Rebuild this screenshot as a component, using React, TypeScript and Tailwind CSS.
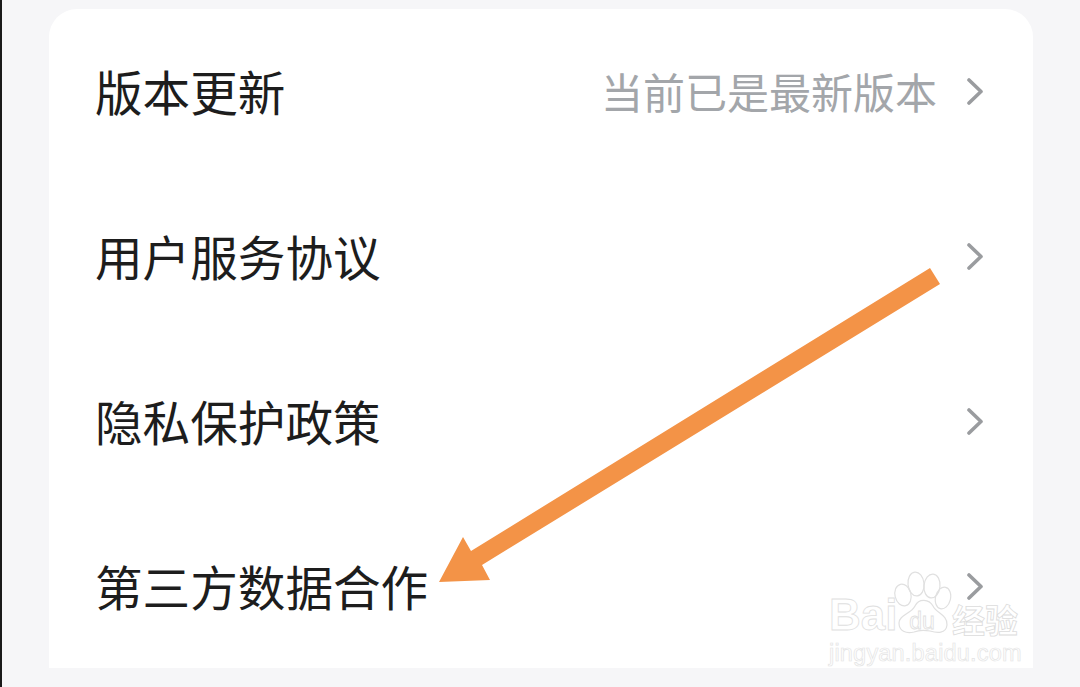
export default function App() {
  const rows = [
    { label: "版本更新", value: "当前已是最新版本" },
    { label: "用户服务协议" },
    { label: "隐私保护政策" },
    { label: "第三方数据合作" },
  ];
  return (
    <div className="relative h-[687px] w-[1080px] overflow-hidden bg-[#f6f6f8] shadow-[inset_2px_0_0_#1a1a1a] pt-[9px] pl-[49px] font-['Noto_Sans_CJK_SC','Noto_Sans',sans-serif]">
      <div className="flex h-[659px] w-[984px] flex-col rounded-t-[28px] bg-white">
        {rows.map((r) => (
          <div key={r.label} className="flex h-[165px] shrink-0 items-center pl-[46px] pr-[50px]">
            <span className="mb-[2px] text-[47.6px] leading-none text-[#1d1d1d]">{r.label}</span>
            <span className="mb-[2px] ml-auto text-[42px] leading-none text-[#a3a6aa]">{r.value}</span>
            <svg width="16" height="27" viewBox="0 0 16 27" className="ml-[30px]" fill="none">
              <path d="M2 2 L14 13.5 L2 25" stroke="#9a9c9f" strokeWidth="3.6" strokeLinecap="round" strokeLinejoin="round" />
            </svg>
          </div>
        ))}
      </div>

      {/* Orange annotation arrow */}
      <svg className="absolute left-0 top-0" width="1080" height="687" viewBox="0 0 1080 687" fill="none">
        <path d="M930 268 L940 284 L482 565 L490 580 L439 582 L463 537 L471 551 Z" fill="#f39347" />
      </svg>

      {/* Watermark */}
      <div className="absolute left-[829px] top-[570px] flex w-[200px] flex-col text-transparent">
        <div className="flex h-[66px] items-end">
          <span className="mb-[-1px] w-[63px] shrink-0 font-['Liberation_Sans',sans-serif] text-[44px] font-bold leading-none [-webkit-text-stroke:0.8px_#e0e0e0]">Bai</span>
          <div className="relative h-[66px] w-[60px] shrink-0">
            <svg className="absolute inset-0" width="60" height="66" viewBox="0 0 60 66" fill="none" stroke="#e0e0e0" strokeWidth="1.2">
              <ellipse cx="11" cy="25" rx="8" ry="11" transform="rotate(-14 11 25)" />
              <ellipse cx="24" cy="14" rx="8" ry="12" transform="rotate(-6 24 14)" />
              <ellipse cx="40" cy="16" rx="8" ry="12" transform="rotate(6 40 16)" />
              <ellipse cx="51" cy="28" rx="7.5" ry="11" transform="rotate(14 51 28)" />
              <path d="M23 36 C27 28 37 29 41 36 C44 43 56 45 55 55 C54 64 45 63 38 61 C32 60 27 60 22 62 C14 64 7 61 7 53 C7 45 19 44 23 36 Z" />
            </svg>
            <div className="absolute inset-x-0 bottom-[3px] flex justify-center">
              <span className="font-['Liberation_Sans',sans-serif] text-[23px] leading-none [-webkit-text-stroke:0.8px_#e0e0e0]">du</span>
            </div>
          </div>
          <span className="shrink-0 whitespace-nowrap text-[33px] font-bold leading-none [-webkit-text-stroke:0.8px_#dcdcdc]">经验</span>
        </div>
        <span className="mt-[6px] whitespace-nowrap font-['Liberation_Sans',sans-serif] text-[23.5px] leading-none tracking-[0.2px] [-webkit-text-stroke:0.7px_#e4e4e4]">jingyan.baidu.com</span>
      </div>
    </div>
  );
}
